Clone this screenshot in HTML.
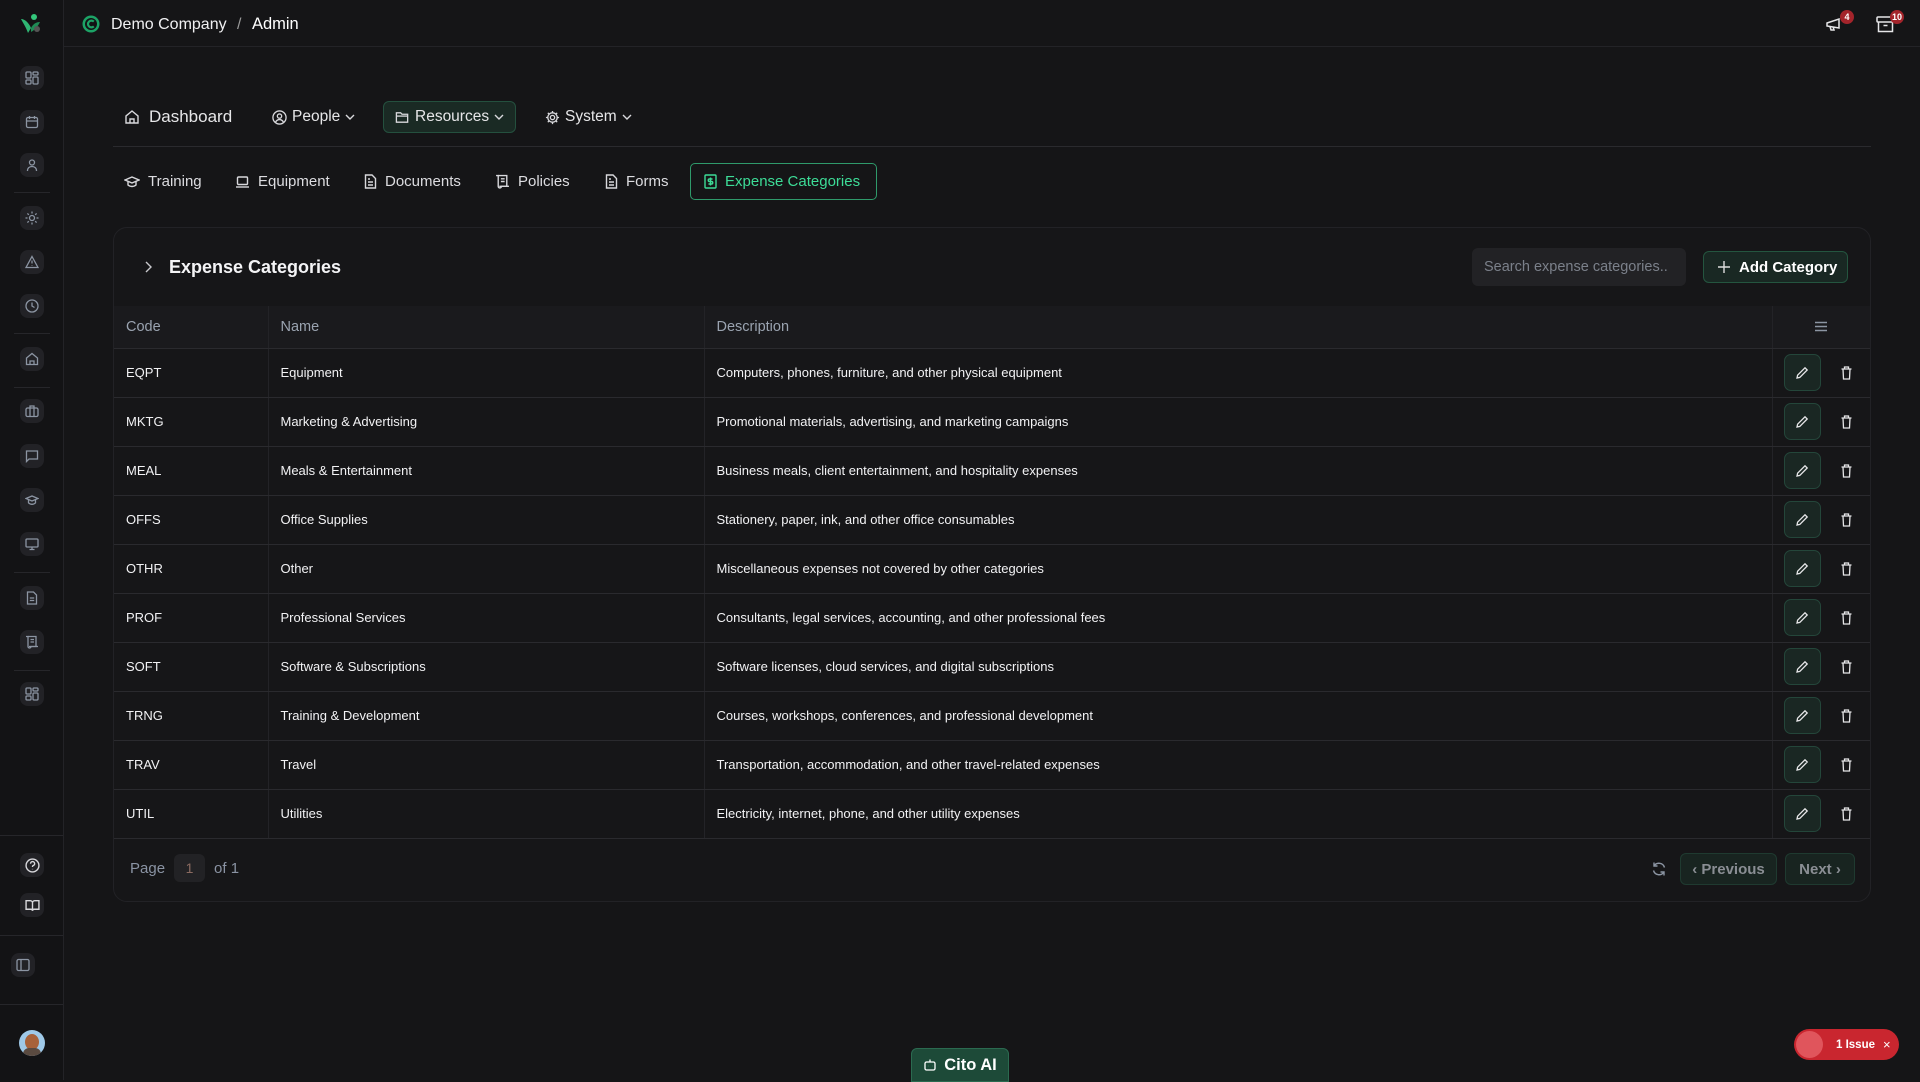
<!DOCTYPE html>
<html><head><meta charset="utf-8">
<style>
*{box-sizing:border-box;margin:0;padding:0}
body{width:1920px;height:1080px;background:#151517;font-family:"Liberation Sans",sans-serif;color:#e8e8ea;position:relative;overflow:hidden}
.abs{position:absolute}
svg{display:block}
.sb{left:0;top:0;width:64px;height:1080px;background:#131315;border-right:1px solid #232327}
.ib{position:absolute;left:20px;width:24px;height:24px;border-radius:8px;background:#222226;display:flex;align-items:center;justify-content:center}
.sep{position:absolute;left:14px;width:36px;height:1px;background:#26262a}
.top{left:64px;top:0;right:0;height:47px;border-bottom:1px solid #232327}
.nav{font-size:16px;color:#e6e6e8;display:flex;align-items:center;gap:5px}
.tab{font-size:15px;color:#dcdce0;display:flex;align-items:center;gap:8px}
.card{left:113px;top:227px;width:1758px;height:675px;border:1px solid #222226;border-radius:14px;background:#161618}
table{border-collapse:collapse;position:absolute;left:0;top:78px;width:1756px;font-size:13px}
th{height:42px;background:#1a1a1d;color:#9aa3b0;font-weight:normal;font-size:14.5px;text-align:left;padding-left:12px;border-bottom:1px solid #2a2a2e}
td{height:49px;padding-left:12px;border-bottom:1px solid #2a2a2e;color:#f2f2f4}
th+th,td+td{border-left:1px solid #232327}
.eb{display:inline-flex;width:37px;height:37px;border-radius:7px;background:#1a2723;border:1px solid #24463a;align-items:center;justify-content:center;vertical-align:middle}
.tb{display:inline-flex;width:24px;margin-left:14px;justify-content:center;vertical-align:middle}
.badge{position:absolute;background:#a3242b;color:#fff;font-size:9px;font-weight:bold;border-radius:8px;height:14px;min-width:14px;text-align:center;line-height:14px;padding:0 2px}
</style></head><body>

<div class="abs sb">
  <svg class="abs" style="left:19px;top:13px" width="24" height="22" viewBox="0 0 24 22"><circle cx="15" cy="4" r="3" fill="#34c77b"/><path d="M2 6c4 0 8 4 10 9l-3 5C7 14 4 10 2 6z" fill="#2fb673"/><path d="M12 15c2-4 5-6 9-6-2 4-5 8-9 10z" fill="#1f8a55"/><circle cx="18" cy="16" r="3" fill="#555"/></svg>
  <div class="ib" style="top:66px"><svg width="14" height="14" viewBox="0 0 14 14" fill="none" stroke="#8c95a3" stroke-width="1.3"><rect x="1" y="1" width="5" height="6" rx="1"/><rect x="8" y="1" width="5" height="3" rx="1"/><rect x="8" y="6" width="5" height="7" rx="1"/><rect x="1" y="9" width="5" height="4" rx="1"/></svg></div>
  <div class="ib" style="top:110px"><svg width="14" height="14" viewBox="0 0 14 14" fill="none" stroke="#8c95a3" stroke-width="1.3"><rect x="1.5" y="2.5" width="11" height="10" rx="1.5"/><path d="M1.5 6h11M4.5 1v3M9.5 1v3"/></svg></div>
  <div class="ib" style="top:153px"><svg width="14" height="14" viewBox="0 0 14 14" fill="none" stroke="#8c95a3" stroke-width="1.3"><circle cx="7" cy="4.5" r="2.5"/><path d="M2.5 13c0-3 2-4.5 4.5-4.5s4.5 1.5 4.5 4.5"/></svg></div>
  <div class="sep" style="top:192px"></div>
  <div class="ib" style="top:206px"><svg width="14" height="14" viewBox="0 0 14 14" fill="none" stroke="#8c95a3" stroke-width="1.3"><circle cx="7" cy="7" r="2.5"/><path d="M7 .5v2M7 11.5v2M.5 7h2M11.5 7h2M2.4 2.4l1.4 1.4M10.2 10.2l1.4 1.4M2.4 11.6l1.4-1.4M10.2 3.8l1.4-1.4"/></svg></div>
  <div class="ib" style="top:250px"><svg width="14" height="14" viewBox="0 0 14 14" fill="none" stroke="#8c95a3" stroke-width="1.3"><path d="M7 1.5l6 11H1z"/><path d="M7 5.5v3M7 10.3v.4"/></svg></div>
  <div class="ib" style="top:294px"><svg width="14" height="14" viewBox="0 0 14 14" fill="none" stroke="#8c95a3" stroke-width="1.3"><circle cx="7" cy="7" r="6"/><path d="M7 3.5V7l2.5 1.5"/></svg></div>
  <div class="sep" style="top:333px"></div>
  <div class="ib" style="top:347px"><svg width="14" height="14" viewBox="0 0 14 14" fill="none" stroke="#8c95a3" stroke-width="1.3"><path d="M1.5 12.5V6L7 1.5 12.5 6v6.5z"/><path d="M5 12.5V9h4v3.5"/></svg></div>
  <div class="sep" style="top:387px"></div>
  <div class="ib" style="top:399px"><svg width="14" height="14" viewBox="0 0 14 14" fill="none" stroke="#8c95a3" stroke-width="1.3"><rect x="1" y="4" width="12" height="8.5" rx="1.5"/><path d="M5 4V2h4v2M5 4v8.5M9 4v8.5"/></svg></div>
  <div class="ib" style="top:444px"><svg width="14" height="14" viewBox="0 0 14 14" fill="none" stroke="#8c95a3" stroke-width="1.3"><path d="M1.5 2h11v8H4l-2.5 2.5z"/></svg></div>
  <div class="ib" style="top:488px"><svg width="14" height="14" viewBox="0 0 14 14" fill="none" stroke="#8c95a3" stroke-width="1.3"><path d="M1 5.5L7 3l6 2.5L7 8z"/><path d="M3.5 6.8v3c1 1 2.2 1.5 3.5 1.5s2.5-.5 3.5-1.5v-3"/></svg></div>
  <div class="ib" style="top:532px"><svg width="14" height="14" viewBox="0 0 14 14" fill="none" stroke="#8c95a3" stroke-width="1.3"><rect x="1" y="2" width="12" height="8" rx="1"/><path d="M7 10v2.5M4.5 12.5h5"/></svg></div>
  <div class="sep" style="top:572px"></div>
  <div class="ib" style="top:586px"><svg width="14" height="14" viewBox="0 0 14 14" fill="none" stroke="#8c95a3" stroke-width="1.3"><path d="M2.5 1h6l3 3v9h-9z"/><path d="M4.8 7h4.4M4.8 9.5h4.4"/></svg></div>
  <div class="ib" style="top:630px"><svg width="14" height="14" viewBox="0 0 14 14" fill="none" stroke="#8c95a3" stroke-width="1.3"><path d="M3 1.5h8v10H4"/><path d="M1 1.5h2v10a1.5 1.5 0 0 0 3 0h7M5.5 4.5h3.5M5.5 7h3.5"/></svg></div>
  <div class="sep" style="top:670px"></div>
  <div class="ib" style="top:682px"><svg width="14" height="14" viewBox="0 0 14 14" fill="none" stroke="#8c95a3" stroke-width="1.3"><rect x="1" y="1" width="5" height="6" rx="1"/><rect x="8" y="1" width="5" height="3" rx="1"/><rect x="8" y="6" width="5" height="7" rx="1"/><rect x="1" y="9" width="5" height="4" rx="1"/></svg></div>
  <div class="sep" style="top:835px;left:0;width:63px"></div>
  <div class="ib" style="top:853px"><svg width="15" height="15" viewBox="0 0 14 14" fill="none" stroke="#d8d8dc" stroke-width="1.3"><circle cx="7" cy="7" r="6"/><path d="M5.2 5.3a1.9 1.9 0 1 1 2.3 1.8c-.4.2-.5.5-.5.9v.4M7 10.2v.3"/></svg></div>
  <div class="ib" style="top:893px"><svg width="15" height="15" viewBox="0 0 14 14" fill="none" stroke="#d8d8dc" stroke-width="1.3"><path d="M1 2.5h4a2 2 0 0 1 2 2V12a1.5 1.5 0 0 0-1.5-1.5H1zM13 2.5H9a2 2 0 0 0-2 2V12a1.5 1.5 0 0 1 1.5-1.5H13z"/></svg></div>
  <div class="sep" style="top:935px;left:0;width:63px"></div>
  <div class="ib" style="top:953px;left:11px"><svg width="14" height="14" viewBox="0 0 14 14" fill="none" stroke="#8c95a3" stroke-width="1.3"><rect x="1" y="1.5" width="12" height="11" rx="1.5"/><path d="M5 1.5v11"/></svg></div>
  <div class="sep" style="top:1004px;left:0;width:63px"></div>
  <div class="abs" style="left:19px;top:1030px;width:26px;height:26px;border-radius:50%;background:#9fc9e8;overflow:hidden"><div style="position:absolute;left:6px;top:4px;width:14px;height:16px;border-radius:50%;background:#a8623a"></div><div style="position:absolute;left:4px;top:18px;width:18px;height:12px;border-radius:6px;background:#5a4a40"></div></div>
</div>

<div class="abs top">
  <svg class="abs" style="left:18px;top:15px" width="18" height="18" viewBox="0 0 18 18"><circle cx="9" cy="9" r="8.5" fill="#1ca366"/><circle cx="9" cy="9" r="6" fill="#131315"/><path d="M11.8 6.6A3.4 3.4 0 1 0 11.8 11.4" fill="none" stroke="#1ca366" stroke-width="2.2"/></svg>
  <div class="abs" style="left:47px;top:15px;font-size:16px;color:#f0f0f2;white-space:nowrap">Demo Company <span style="color:#999;margin:0 6px">/</span> <span style="color:#fff;font-size:16.5px">Admin</span></div>
  <svg class="abs" style="left:1761px;top:16px" width="20" height="17" viewBox="0 0 20 17" fill="none" stroke="#e6e6e8" stroke-width="1.5"><path d="M2 7l12-4v9L2 10z"/><path d="M5 10.5l1 3.5h3l-.8-3"/></svg>
  <div class="badge" style="left:1776px;top:10px">4</div>
  <svg class="abs" style="left:1812px;top:15px" width="20" height="18" viewBox="0 0 20 18" fill="none" stroke="#e6e6e8" stroke-width="1.5"><rect x="1" y="2" width="17" height="5" rx="1"/><path d="M2.5 7v9.5h14V7M7.5 10.5h4"/></svg>
  <div class="badge" style="left:1826px;top:10px">10</div>
</div>

<div class="abs nav" style="left:124px;top:107px"><svg width="16" height="16" viewBox="0 0 16 16" fill="none" stroke="#d8d8dc" stroke-width="1.4"><path d="M2 14V7l6-5 6 5v7z"/><path d="M6 14v-4h4v4"/></svg><span style="margin-left:4px;font-size:17px">Dashboard</span></div>
<div class="abs nav" style="left:272px;top:108px;font-size:15.5px"><svg width="15" height="15" viewBox="0 0 16 16" fill="none" stroke="#d8d8dc" stroke-width="1.4"><circle cx="8" cy="8" r="7"/><circle cx="8" cy="6.5" r="2.3"/><path d="M3.8 13c1-2 2.4-2.8 4.2-2.8s3.2.8 4.2 2.8"/></svg>People<svg width="10" height="8" viewBox="0 0 10 8" fill="none" stroke="#d8d8dc" stroke-width="1.4"><path d="M1 2l4 4 4-4"/></svg></div>
<div class="abs" style="left:383px;top:101px;width:133px;height:32px;border:1px solid #24503e;border-radius:6px;background:#1a2a24"></div>
<div class="abs nav" style="left:395px;top:108px;font-size:15.5px"><svg width="15" height="15" viewBox="0 0 16 16" fill="none" stroke="#d8d8dc" stroke-width="1.4"><path d="M1.5 13V3h4.5l1.5 1.5h6V13z"/><path d="M1.5 6.5h12"/></svg>Resources<svg width="10" height="8" viewBox="0 0 10 8" fill="none" stroke="#d8d8dc" stroke-width="1.4"><path d="M1 2l4 4 4-4"/></svg></div>
<div class="abs nav" style="left:545px;top:108px;font-size:15.5px"><svg width="15" height="15" viewBox="0 0 16 16" fill="none" stroke="#d8d8dc" stroke-width="1.4"><circle cx="8" cy="8" r="2.3"/><path d="M8 1v2M8 13v2M1 8h2M13 8h2M3 3l1.4 1.4M11.6 11.6L13 13M3 13l1.4-1.4M11.6 4.4L13 3"/><circle cx="8" cy="8" r="5"/></svg>System<svg width="10" height="8" viewBox="0 0 10 8" fill="none" stroke="#d8d8dc" stroke-width="1.4"><path d="M1 2l4 4 4-4"/></svg></div>
<div class="abs" style="left:113px;top:146px;width:1758px;height:1px;background:#2a2a2e"></div>

<div class="abs tab" style="left:124px;top:173px"><svg width="16" height="14" viewBox="0 0 16 14" fill="none" stroke="#d8d8dc" stroke-width="1.4"><path d="M1 5l7-3 7 3-7 3z"/><path d="M4 6.5v3.5c1.2 1 2.5 1.5 4 1.5s2.8-.5 4-1.5V6.5"/></svg>Training</div>
<div class="abs tab" style="left:235px;top:173px"><svg width="15" height="14" viewBox="0 0 15 14" fill="none" stroke="#d8d8dc" stroke-width="1.4"><rect x="2.5" y="2" width="10" height="7.5" rx="1"/><path d="M1 12h13"/></svg>Equipment</div>
<div class="abs tab" style="left:364px;top:173px"><svg width="13" height="15" viewBox="0 0 13 15" fill="none" stroke="#d8d8dc" stroke-width="1.4"><path d="M1.5 1h6.5l3.5 3.5V14h-10z"/><path d="M4 8h5M4 11h5M4 5h2"/></svg>Documents</div>
<div class="abs tab" style="left:495px;top:173px"><svg width="15" height="15" viewBox="0 0 14 14" fill="none" stroke="#d8d8dc" stroke-width="1.3"><path d="M3 1.5h8v10H4"/><path d="M1 1.5h2v10a1.5 1.5 0 0 0 3 0h7M5.5 4.5h3.5M5.5 7h3.5"/></svg>Policies</div>
<div class="abs tab" style="left:605px;top:173px"><svg width="13" height="15" viewBox="0 0 13 15" fill="none" stroke="#d8d8dc" stroke-width="1.4"><path d="M1.5 1h6.5l3.5 3.5V14h-10z"/><path d="M4 8h5M4 11h5M4 5h2"/></svg>Forms</div>
<div class="abs" style="left:690px;top:163px;width:187px;height:37px;border:1px solid #2f9a6b;border-radius:5px"></div>
<div class="abs tab" style="left:704px;top:173px;color:#3ddc97"><svg width="13" height="15" viewBox="0 0 13 15" fill="none" stroke="#3ddc97" stroke-width="1.4"><rect x="1" y="1" width="11" height="13" rx="1"/><path d="M6.5 3.5v8M8.5 5H5.5a1.2 1.2 0 0 0 0 2.5h2a1.2 1.2 0 0 1 0 2.5H4.5"/></svg>Expense Categories</div>

<div class="abs card">
  <svg class="abs" style="left:29px;top:32px" width="10" height="14" viewBox="0 0 10 14" fill="none" stroke="#c8c8cc" stroke-width="1.4"><path d="M3 2l5 5-5 5"/></svg>
  <div class="abs" style="left:55px;top:29px;font-size:18px;font-weight:bold;color:#f4f4f6">Expense Categories</div>
  <div class="abs" style="left:1358px;top:20px;width:214px;height:38px;border-radius:6px;background:#222225;color:#7b808a;font-size:14.5px;padding:11px 12px;white-space:nowrap;overflow:hidden">Search expense categories..</div>
  <div class="abs" style="left:1589px;top:23px;width:145px;height:32px;border-radius:6px;background:#192823;border:1px solid #24553f;color:#fff;font-size:15px;font-weight:bold;display:flex;align-items:center;padding-left:14px;gap:9px;white-space:nowrap"><svg width="12" height="12" viewBox="0 0 12 12" stroke="#ddd" stroke-width="1.4"><path d="M6 0v12M0 6h12"/></svg>Add Category</div>
  <table>
    <tr><th style="width:154px">Code</th><th style="width:436px">Name</th><th style="width:1068px">Description</th><th style="padding:0;text-align:center"><svg style="margin:0 auto" width="14" height="11" viewBox="0 0 14 11" stroke="#8c95a3" stroke-width="1.6"><path d="M1 1.5h12M1 5.5h12M1 9.5h12"/></svg></th></tr>
    <tr><td>EQPT</td><td>Equipment</td><td>Computers, phones, furniture, and other physical equipment</td><td class="a"></td></tr>
    <tr><td>MKTG</td><td>Marketing &amp; Advertising</td><td>Promotional materials, advertising, and marketing campaigns</td><td class="a"></td></tr>
    <tr><td>MEAL</td><td>Meals &amp; Entertainment</td><td>Business meals, client entertainment, and hospitality expenses</td><td class="a"></td></tr>
    <tr><td>OFFS</td><td>Office Supplies</td><td>Stationery, paper, ink, and other office consumables</td><td class="a"></td></tr>
    <tr><td>OTHR</td><td>Other</td><td>Miscellaneous expenses not covered by other categories</td><td class="a"></td></tr>
    <tr><td>PROF</td><td>Professional Services</td><td>Consultants, legal services, accounting, and other professional fees</td><td class="a"></td></tr>
    <tr><td>SOFT</td><td>Software &amp; Subscriptions</td><td>Software licenses, cloud services, and digital subscriptions</td><td class="a"></td></tr>
    <tr><td>TRNG</td><td>Training &amp; Development</td><td>Courses, workshops, conferences, and professional development</td><td class="a"></td></tr>
    <tr><td>TRAV</td><td>Travel</td><td>Transportation, accommodation, and other travel-related expenses</td><td class="a"></td></tr>
    <tr><td>UTIL</td><td>Utilities</td><td>Electricity, internet, phone, and other utility expenses</td><td class="a"></td></tr>
  </table>
  <div class="abs" style="left:16px;top:626px;font-size:15px;color:#8a93a3;display:flex;align-items:center;gap:9px">Page <span style="display:inline-block;width:31px;height:28px;border-radius:6px;background:#222225;text-align:center;line-height:28px;color:#8a6a60;font-size:14px">1</span> of 1</div>
  <svg class="abs" style="left:1537px;top:633px" width="16" height="16" viewBox="0 0 16 16" fill="none" stroke="#8c95a3" stroke-width="1.4"><path d="M13.5 6.5A5.8 5.8 0 0 0 3 5M2.5 9.5A5.8 5.8 0 0 0 13 11"/><path d="M3 1.5V5h3.5M13 14.5V11H9.5"/></svg>
  <div class="abs" style="left:1566px;top:625px;width:97px;height:32px;border-radius:6px;background:#182420;border:1px solid #1f3a30;color:#8a8e94;font-size:15px;font-weight:bold;display:flex;align-items:center;justify-content:center;gap:5px">‹ Previous</div>
  <div class="abs" style="left:1671px;top:625px;width:70px;height:32px;border-radius:6px;background:#182420;border:1px solid #1f3a30;color:#8a8e94;font-size:15px;font-weight:bold;display:flex;align-items:center;justify-content:center;gap:5px">Next ›</div>
</div>

<div class="abs" style="left:911px;top:1048px;width:98px;height:34px;border-radius:6px 6px 0 0;background:#1d4a38;border:1px solid #2b6a50;color:#fff;font-size:16.5px;font-weight:bold;display:flex;align-items:center;justify-content:center;gap:7px"><svg width="14" height="14" viewBox="0 0 14 14" fill="none" stroke="#fff" stroke-width="1.3"><rect x="2" y="4" width="10" height="8" rx="1.5"/><path d="M7 1.5V4M5 8h.1M9 8h.1"/></svg>Cito AI</div>
<div class="abs" style="left:1794px;top:1029px;width:105px;height:31px;border-radius:16px;background:#c9262f;color:#fff;font-size:11.5px;font-weight:bold;display:flex;align-items:center"><div style="width:27px;height:27px;border-radius:50%;background:#e0555c;margin-left:2px"></div><span style="margin-left:13px">1 Issue</span><span style="margin-left:8px;font-weight:normal;font-size:13px">×</span></div>

<script>
document.querySelectorAll('td.a').forEach(function(t){t.style.padding='0 0 0 11px';t.innerHTML='<span class="eb"><svg width="14" height="14" viewBox="0 0 14 14" fill="none" stroke="#e6e6e8" stroke-width="1.3"><path d="M2 12l.6-2.8L10 1.8l2.2 2.2-7.4 7.4z"/></svg></span><span class="tb"><svg width="11" height="14" viewBox="0 0 11 14" fill="none" stroke="#e6e6e8" stroke-width="1.3"><path d="M.5 3h10M3.5 3V1h4v2M2 3l.5 10h6L9 3"/></svg></span>';});
</script>
</body></html>
